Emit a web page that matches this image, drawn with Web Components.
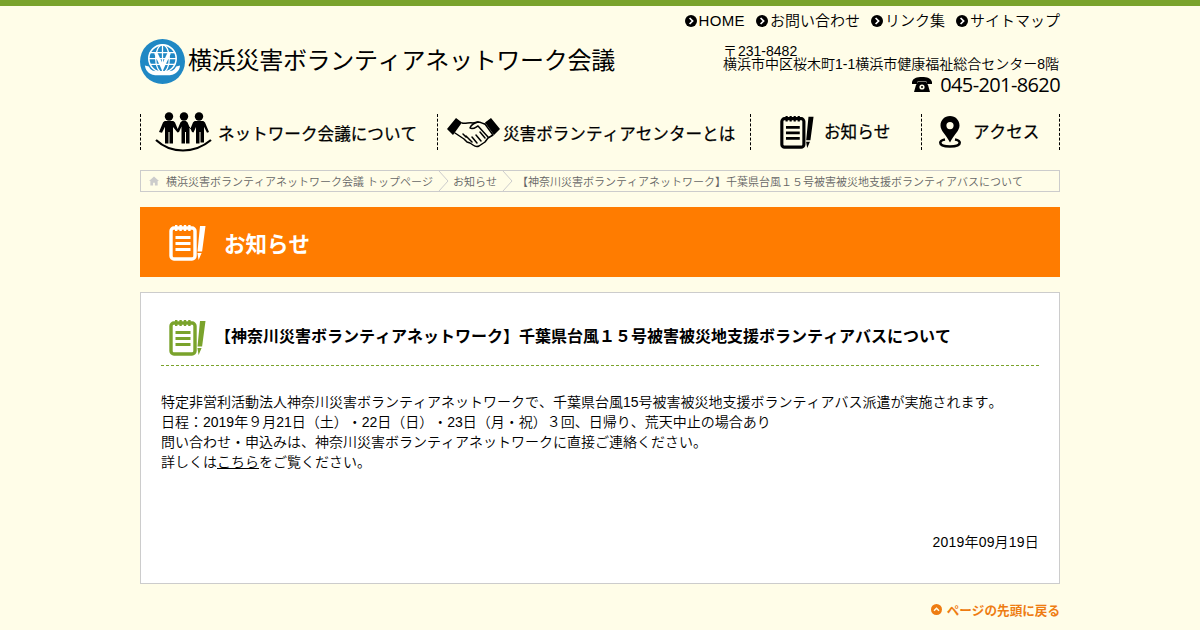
<!DOCTYPE html>
<html lang="ja">
<head>
<meta charset="utf-8">
<title>お知らせ | 横浜災害ボランティアネットワーク会議</title>
<style>
  html, body { margin: 0; padding: 0; height: 630px; overflow: hidden; }
  body {
    background: #fffde8;
    color: #000;
    font-family: "Liberation Sans", "Noto Sans CJK JP", sans-serif;
    font-size: 14px;
    text-spacing-trim: space-all;
    font-kerning: none;
    font-weight: 350;
    border-top: 6px solid #7aa32c;
  }
  .wrap { width: 920px; margin: 0 auto; }
</style>
</head>
<body>
<div class="wrap">
  <site-header></site-header>
  <main-nav></main-nav>
  <bread-crumbs></bread-crumbs>
  <page-title>お知らせ</page-title>
  <news-card date="2019年09月19日">
    <span slot="title">【神奈川災害ボランティアネットワーク】千葉県台風１５号被害被災地支援ボランティアバスについて</span>
    特定非営利活動法人神奈川災害ボランティアネットワークで、千葉県台風15号被害被災地支援ボランティアバス派遣が実施されます。<br>
    日程：2019年９月21日（土）・22日（日）・23日（月・祝）３回、日帰り、荒天中止の場合あり<br>
    問い合わせ・申込みは、神奈川災害ボランティアネットワークに直接ご連絡ください。<br>
    詳しくは<a href="#" style="color:#000">こちら</a>をご覧ください。
  </news-card>
  <page-top></page-top>
</div>

<script>
const NOTE = `<svg viewBox="0 0 37 37" width="100%" height="100%" fill="currentColor">
  <rect x="2" y="4" width="24" height="31" rx="3" fill="none" stroke="currentColor" stroke-width="3.4"/>
  <path d="M6 1h2.4v6H6zM10.400 1h2.400v6h-2.400zM14.800 1h2.400v6h-2.400zM19.200 1h2.400v6h-2.400z"/>
  <path d="M6.500 12h15v3h-15zM6.500 18h15v3h-15zM6.500 24h15v3h-15z"/>
  <path d="M31 2h5.500l-3.400 25.500h-4.600zM28.400 29h4.200l-3 7z"/>
</svg>`;

const ICONS = {
  note: NOTE,
  bullet: `<svg viewBox="0 0 12 12" width="100%" height="100%"><circle cx="6" cy="6" r="6" fill="#000"/><path d="M4.600 3l3 3-3 3" fill="none" stroke="#fff" stroke-width="1.700"/></svg>`,
  logo: `<svg viewBox="0 0 46 46" width="100%" height="100%">
    <circle cx="23" cy="23" r="23" fill="#2088c4"/>
    <g fill="none" stroke="#fff" stroke-width="1.300">
      <circle cx="23" cy="20" r="14" stroke-width="1.600"/>
      <ellipse cx="23" cy="20" rx="7" ry="14"/>
      <path d="M23 6v28M10 14h26M9 20h28M10 26h26"/>
    </g>
    <path d="M16 14l7 15 7-15" fill="none" stroke="#fff" stroke-width="3.400"/>
    <path d="M5 27c1 7 6 10 13 10h10c7 0 12-3 13-10l-4 1c-2 4-5 5-9 5h-10c-4 0-7-1-9-5z" fill="#fff"/>
    <path d="M12 33h22v3H12z" fill="#fff"/>
  </svg>`,
  people: `<svg viewBox="0 0 58 41" width="100%" height="100%" fill="#000">
    <circle cx="14" cy="4.500" r="4.200"/><circle cx="29" cy="4.500" r="4.200"/><circle cx="44" cy="4.500" r="4.200"/>
    <path d="M4 20l4-9.500c.5-1 1.500-1.600 2.500-1.600h7c1 0 2 .6 2.500 1.600l2.700 6.500 2.700-6.500c.5-1 1.500-1.600 2.500-1.600h2.200c1 0 2 .6 2.500 1.600l2.700 6.500 2.700-6.500c.5-1 1.500-1.600 2.500-1.600h7c1 0 2 .6 2.500 1.600l4 9.500-2 .8-3-6v15.600h-3.500V20h-1v11.500h-3.500V15l-2.500 5.500-1.500-.5-2.500-5.500v17h-3.500V20h-1v11.500h-3.500V14.500l-2.500 5.500-1.500.5L18 15v16.500h-3.500V20h-1v11.500H10V14.800l-3 6z"/>
    <path d="M1 28c8 7.500 17 10.500 27 10.500S47 35.500 56 28" fill="none" stroke="#000" stroke-width="2.200"/>
  </svg>`,
  hands: `<svg viewBox="0 0 53 31" width="100%" height="100%">
    <path d="M0 12L9 1l6 4.500L6 18zM53 12L44 1l-6 4.500L47 18z" fill="#000"/>
    <g fill="none" stroke="#000" stroke-width="1.500" stroke-linejoin="round" stroke-linecap="round">
      <path d="M15 6c4 1 7-1 11 0l5-1c3 0 5 2 7 2"/>
      <path d="M38 7l8 11-5 3-3 4-3 2-3 2c-2 1-4 .5-6-1l-3-2-3-1-3-3-3-2-6-4"/>
      <path d="M31 5c-4 1-7 3-8 6 3 2 6-1 8-2l10 11"/>
      <path d="M33 15l5 6M29 18l5 6M25 20l5 6M22 22l3 3M19 19l3 3M16 17l3 3"/>
    </g>
  </svg>`,
  pin: `<svg viewBox="0 0 22 32" width="100%" height="100%">
    <path fill-rule="evenodd" d="M11 0c5.500 0 9.500 4.200 9.500 9.500 0 5.500-5.500 9-9.500 17-4-8-9.500-11.500-9.500-17C1.500 4.200 5.500 0 11 0zm0 6a3.600 3.600 0 1 0 0 7.200A3.600 3.600 0 0 0 11 6z" fill="#000"/>
    <path d="M6 23.500c-3 .5-4.700 1.600-4.700 3.300 0 2.400 4.300 3.700 9.700 3.700s9.700-1.300 9.700-3.700c0-1.700-1.700-2.800-4.700-3.300" fill="none" stroke="#000" stroke-width="2.600"/>
  </svg>`,
  phone: `<svg viewBox="0 0 20 15" width="100%" height="100%" fill="#000">
    <path d="M0 5C1 1 5 0 10 0s9 1 10 5v2h-5.500V4.500h-9V7H0z"/>
    <path d="M4 8l2-3h8l2 3 2 7H2z"/>
    <circle cx="10" cy="10" r="2.600" fill="#fffde8"/>
    <circle cx="10" cy="10" r="1" fill="#000"/>
  </svg>`,
  home: `<svg viewBox="0 0 11 10" width="100%" height="100%" fill="#ccc"><path d="M5.500 0L11 5H9.500v5H6.500V7h-2v3H1.500V5H0z"/></svg>`,
  up: `<svg viewBox="0 0 11 11" width="100%" height="100%"><circle cx="5.500" cy="5.500" r="5.500" fill="#ee7c12"/><path d="M3 6.800l2.500-2.500L8 6.800" fill="none" stroke="#fffde8" stroke-width="1.500"/></svg>`
};

class SiteIcon extends HTMLElement {
  connectedCallback() {
    if (this.shadowRoot) return;
    const root = this.attachShadow({mode: 'open'});
    const w = this.getAttribute('w'), h = this.getAttribute('h') || w;
    root.innerHTML = `
      <style>:host { display: block; flex: none; width: ${w}px; height: ${h}px; } svg { display: block; }</style>
      ${ICONS[this.getAttribute('name')]}`;
  }
}
customElements.define('site-icon', SiteIcon);

class SiteHeader extends HTMLElement {
  constructor() {
    super();
    this.attachShadow({mode: 'open'}).innerHTML = `
      <style>
        :host { display: block; height: 108px; }
        * { box-sizing: border-box; margin: 0; padding: 0; }
        .links { display: flex; justify-content: flex-end; gap: 11px; padding-top: 5px; font-size: 15px; line-height: 20px; list-style: none; }
        .links li { display: flex; align-items: center; gap: 2px; }
        .links li:first-child { letter-spacing: .35px; }
        .row { display: flex; justify-content: space-between; align-items: flex-start; padding-top: 7px; }
        .logo { display: flex; align-items: center; gap: 3px; height: 46px; font-size: 24px; font-weight: 400; letter-spacing: -.28px; white-space: nowrap; }
        .logo span { margin-top: -5px; }
        .contact { width: 337px; font-size: 14px; line-height: 13px; padding-top: 7px; white-space: nowrap; }
        .contact b { font-weight: inherit; margin-left: 1px; }
        .tel { display: flex; justify-content: flex-end; align-items: center; gap: 8px; margin-top: 5px; height: 16px; font-size: 20px; font-family: "Open Sans", sans-serif; font-weight: 400; letter-spacing: -.62px; }
      </style>
      <ul class="links">
        <li><site-icon name="bullet" w="12"></site-icon>HOME</li>
        <li><site-icon name="bullet" w="12"></site-icon>お問い合わせ</li>
        <li><site-icon name="bullet" w="12"></site-icon>リンク集</li>
        <li><site-icon name="bullet" w="12"></site-icon>サイトマップ</li>
      </ul>
      <div class="row">
        <h1 class="logo"><site-icon name="logo" w="45"></site-icon><span>横浜災害ボランティアネットワーク会議</span></h1>
        <div class="contact">
          〒<b>231-8482</b><br>横浜市中区桜木町1-1横浜市健康福祉総合センター8階
          <div class="tel"><site-icon name="phone" w="20" h="15"></site-icon><span>045-201-8620</span></div>
        </div>
      </div>`;
  }
}
customElements.define('site-header', SiteHeader);

class NavItem extends HTMLElement {
  constructor() {
    super();
    this.attachShadow({mode: 'open'}).innerHTML = `
      <style>
        :host { display: flex; align-items: center; height: 36px; border-left: 1px dashed #000; font-size: 16.6px; font-weight: 400; -webkit-text-stroke: .25px #000; white-space: nowrap; box-sizing: border-box; }
        :host([last]) { border-right: 1px dashed #000; }
      </style>
      <slot></slot>`;
  }
}
customElements.define('nav-item', NavItem);

class MainNav extends HTMLElement {
  constructor() {
    super();
    this.attachShadow({mode: 'open'}).innerHTML = `
      <style>
        :host { display: grid; grid-template-columns: 297px 313px 171px 139px; height: 56px; align-items: start; }
        span { display: block; }
      </style>
      <nav-item style="padding-left:14px;gap:5px"><site-icon name="people" w="58" h="41"></site-icon><span style="margin-top:1px">ネットワーク会議について</span></nav-item>
      <nav-item style="padding-left:9px;gap:3px"><site-icon name="hands" w="53" h="31"></site-icon><span style="margin-top:1px">災害ボランティアセンターとは</span></nav-item>
      <nav-item style="padding-left:29px;gap:10px"><site-icon name="note" w="34" h="34"></site-icon><span style="margin-top:-3px">お知らせ</span></nav-item>
      <nav-item last style="padding-left:17px;gap:12px"><site-icon name="pin" w="22" h="32"></site-icon><span style="margin-top:-3px">アクセス</span></nav-item>`;
  }
}
customElements.define('main-nav', MainNav);

class BreadCrumbs extends HTMLElement {
  constructor() {
    super();
    const sep = `<svg width="12" height="20" viewBox="0 0 12 20"><path d="M1 0l9 10-9 10" fill="none" stroke="#ccc"/></svg>`;
    this.attachShadow({mode: 'open'}).innerHTML = `
      <style>
        :host { display: flex; align-items: center; height: 22px; box-sizing: border-box; border: 1px solid #ccc; padding-left: 8px; font-size: 11px; color: #666; white-space: nowrap; overflow: hidden; }
        site-icon { margin-right: 7px; }
        svg { flex: none; margin: 0 3px 0 5px; }
      </style>
      <site-icon name="home" w="10"></site-icon>
      <span>横浜災害ボランティアネットワーク会議 トップページ</span>${sep}
      <span>お知らせ</span>${sep}
      <span>【神奈川災害ボランティアネットワーク】千葉県台風１５号被害被災地支援ボランティアバスについて</span>`;
  }
}
customElements.define('bread-crumbs', BreadCrumbs);

class PageTitle extends HTMLElement {
  constructor() {
    super();
    this.attachShadow({mode: 'open'}).innerHTML = `
      <style>
        :host { display: flex; align-items: center; gap: 18px; height: 70px; margin-top: 15px; padding: 0 0 0 29px; background: #ff7c00; color: #fff; font-size: 21.5px; font-weight: 700; }
        span { margin-top: 1px; }
      </style>
      <site-icon name="note" w="37"></site-icon><span><slot></slot></span>`;
  }
}
customElements.define('page-title', PageTitle);

class NewsCard extends HTMLElement {
  constructor() {
    super();
    this.attachShadow({mode: 'open'}).innerHTML = `
      <style>
        :host { display: block; box-sizing: border-box; height: 292px; margin-top: 15px; padding: 26px 20px 0; background: #fff; border: 1px solid #ccc; }
        h2 { display: flex; align-items: center; gap: 9px; margin: 0; padding: 0 0 10px 8px; height: 47px; box-sizing: border-box; border-bottom: 1px dashed #7aa32c; font-size: 16px; line-height: 22px; font-weight: 700; }
        site-icon { color: #7aa32c; }
        .body { margin-top: 26px; line-height: 20px; height: 140px; }
        .date { text-align: right; line-height: 20px; letter-spacing: .2px; }
      </style>
      <h2><site-icon name="note" w="37"></site-icon><slot name="title"></slot></h2>
      <div class="body"><slot></slot></div>
      <div class="date">${this.getAttribute('date')}</div>`;
  }
}
customElements.define('news-card', NewsCard);

class PageTop extends HTMLElement {
  constructor() {
    super();
    this.attachShadow({mode: 'open'}).innerHTML = `
      <style>
        :host { display: flex; justify-content: flex-end; align-items: center; gap: 5px; margin-top: 15px; height: 20px; color: #ee7c12; font-size: 12.6px; font-weight: 700; }
      </style>
      <site-icon name="up" w="11"></site-icon><span>ページの先頭に戻る</span>`;
  }
}
customElements.define('page-top', PageTop);
</script>
</body>
</html>
